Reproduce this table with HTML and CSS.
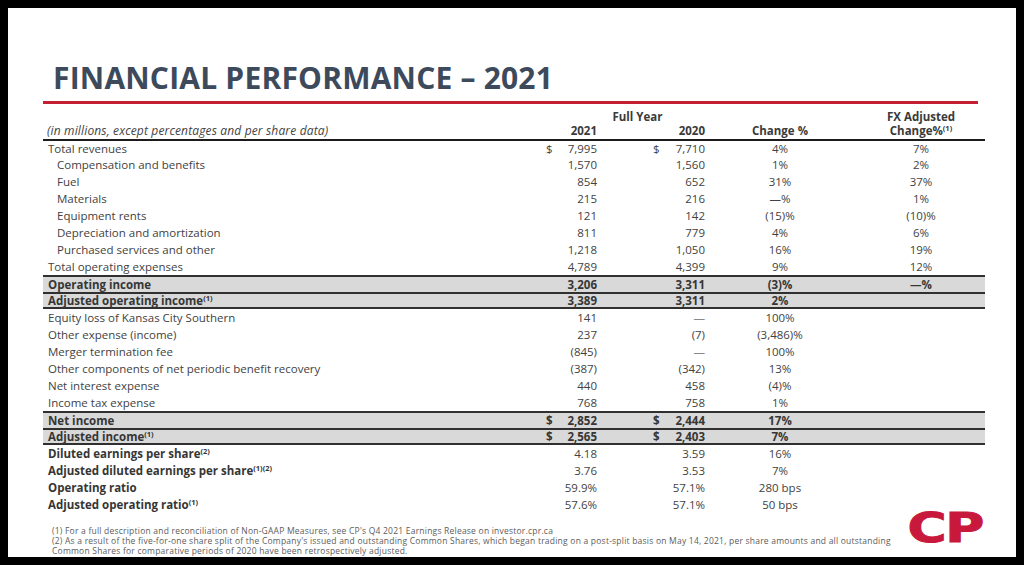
FILE: index.html
```html
<!DOCTYPE html>
<html lang="en">
<head>
<meta charset="utf-8">
<title>Financial Performance – 2021</title>
<link rel="stylesheet" href="styles.css">
</head>
<body>
<div class="slide">
  <h1 class="title">FINANCIAL PERFORMANCE – 2021</h1>
  <div class="rule"></div>
  <div class="table">
    <div class="grid thead">
      <div class="h-full">Full Year</div>
      <div class="h-fx1">FX Adjusted</div>
      <div class="caption">(in millions, except percentages and per share data)</div>
      <div class="h-2021">2021</div>
      <div class="h-2020">2020</div>
      <div class="h-chg">Change %</div>
      <div class="h-fx2">Change%<span class="sup">(1)</span></div>
    </div>

    <div class="grid row first">
      <div class="label">Total revenues</div>
      <div class="v1 money"><span>$</span><span>7,995</span></div>
      <div class="v2 money"><span>$</span><span>7,710</span></div>
      <div class="chg">4%</div>
      <div class="fx">7%</div>
    </div>
    <div class="grid row">
      <div class="label indent">Compensation and benefits</div>
      <div class="v1">1,570</div><div class="v2">1,560</div>
      <div class="chg">1%</div><div class="fx">2%</div>
    </div>
    <div class="grid row">
      <div class="label indent">Fuel</div>
      <div class="v1">854</div><div class="v2">652</div>
      <div class="chg">31%</div><div class="fx">37%</div>
    </div>
    <div class="grid row">
      <div class="label indent">Materials</div>
      <div class="v1">215</div><div class="v2">216</div>
      <div class="chg">—%</div><div class="fx">1%</div>
    </div>
    <div class="grid row">
      <div class="label indent">Equipment rents</div>
      <div class="v1">121</div><div class="v2">142</div>
      <div class="chg">(15)%</div><div class="fx">(10)%</div>
    </div>
    <div class="grid row">
      <div class="label indent">Depreciation and amortization</div>
      <div class="v1">811</div><div class="v2">779</div>
      <div class="chg">4%</div><div class="fx">6%</div>
    </div>
    <div class="grid row">
      <div class="label indent">Purchased services and other</div>
      <div class="v1">1,218</div><div class="v2">1,050</div>
      <div class="chg">16%</div><div class="fx">19%</div>
    </div>
    <div class="grid row">
      <div class="label">Total operating expenses</div>
      <div class="v1">4,789</div><div class="v2">4,399</div>
      <div class="chg">9%</div><div class="fx">12%</div>
    </div>
    <div class="grid row band">
      <div class="label">Operating income</div>
      <div class="v1">3,206</div><div class="v2">3,311</div>
      <div class="chg">(3)%</div><div class="fx">—%</div>
    </div>
    <div class="grid row band last">
      <div class="label">Adjusted operating income<span class="sup">(1)</span></div>
      <div class="v1">3,389</div><div class="v2">3,311</div>
      <div class="chg">2%</div><div class="fx"></div>
    </div>
    <div class="grid row">
      <div class="label">Equity loss of Kansas City Southern</div>
      <div class="v1">141</div><div class="v2 dash">—</div>
      <div class="chg">100%</div><div class="fx"></div>
    </div>
    <div class="grid row">
      <div class="label">Other expense (income)</div>
      <div class="v1">237</div><div class="v2">(7)</div>
      <div class="chg">(3,486)%</div><div class="fx"></div>
    </div>
    <div class="grid row">
      <div class="label">Merger termination fee</div>
      <div class="v1">(845)</div><div class="v2 dash">—</div>
      <div class="chg">100%</div><div class="fx"></div>
    </div>
    <div class="grid row">
      <div class="label">Other components of net periodic benefit recovery</div>
      <div class="v1">(387)</div><div class="v2">(342)</div>
      <div class="chg">13%</div><div class="fx"></div>
    </div>
    <div class="grid row">
      <div class="label">Net interest expense</div>
      <div class="v1">440</div><div class="v2">458</div>
      <div class="chg">(4)%</div><div class="fx"></div>
    </div>
    <div class="grid row">
      <div class="label">Income tax expense</div>
      <div class="v1">768</div><div class="v2">758</div>
      <div class="chg">1%</div><div class="fx"></div>
    </div>
    <div class="grid row band">
      <div class="label">Net income</div>
      <div class="v1 money"><span>$</span><span>2,852</span></div>
      <div class="v2 money"><span>$</span><span>2,444</span></div>
      <div class="chg">17%</div><div class="fx"></div>
    </div>
    <div class="grid row band last">
      <div class="label">Adjusted income<span class="sup">(1)</span></div>
      <div class="v1 money"><span>$</span><span>2,565</span></div>
      <div class="v2 money"><span>$</span><span>2,403</span></div>
      <div class="chg">7%</div><div class="fx"></div>
    </div>
    <div class="grid row strong">
      <div class="label">Diluted earnings per share<span class="sup">(2)</span></div>
      <div class="v1">4.18</div><div class="v2">3.59</div>
      <div class="chg">16%</div><div class="fx"></div>
    </div>
    <div class="grid row strong">
      <div class="label">Adjusted diluted earnings per share<span class="sup">(1)(2)</span></div>
      <div class="v1">3.76</div><div class="v2">3.53</div>
      <div class="chg">7%</div><div class="fx"></div>
    </div>
    <div class="grid row strong">
      <div class="label">Operating ratio</div>
      <div class="v1">59.9%</div><div class="v2">57.1%</div>
      <div class="chg">280 bps</div><div class="fx"></div>
    </div>
    <div class="grid row strong">
      <div class="label">Adjusted operating ratio<span class="sup">(1)</span></div>
      <div class="v1">57.6%</div><div class="v2">57.1%</div>
      <div class="chg">50 bps</div><div class="fx"></div>
    </div>
  </div>

  <div class="foot">
    <div class="notes">
      <div>(1) For a full description and reconciliation of Non-GAAP Measures, see CP's Q4 2021 Earnings Release on investor.cpr.ca</div>
      <div>(2) As a result of the five-for-one share split of the Company's issued and outstanding Common Shares, which began trading on a post-split basis on May 14, 2021, per share amounts and all outstanding</div>
      <div>Common Shares for comparative periods of 2020 have been retrospectively adjusted.</div>
    </div>
    <div class="logo">CP</div>
  </div>
</div>
</body>
</html>
```

FILE: styles.css
```css
* {
  box-sizing: border-box;
}

html, body {
  margin: 0;
  padding: 0;
  background: #000;
}

body {
  font-family: "Open Sans", "Noto Sans", sans-serif;
}

.slide {
  margin: 8px;
  width: 1008px;
  height: 549px;
  background: #fff;
  padding: 54px 0 0 35px;
  overflow: hidden;
}

.title {
  margin: 0;
  padding-left: 10px;
  font-size: 30px;
  line-height: 32px;
  font-weight: 700;
  color: #3d4a5b;
  letter-spacing: 0.2px;
}

.rule {
  margin-top: 7px;
  width: 935px;
  height: 3px;
  background: #c42033;
}

.table {
  margin-top: 6px;
  width: 942px;
  font-size: 11.5px;
  color: #424242;
}

.grid {
  display: grid;
  grid-template-columns: 497px 61px 108px 142px 134px;
}

.thead {
  grid-template-rows: 14px 15px;
  border-bottom: 2px solid #1c1c1c;
  font-weight: 700;
  line-height: 14px;
  color: #3a3a3a;
}

.h-full {
  grid-column: 2 / 4;
  grid-row: 1;
  text-align: center;
  padding-left: 26px;
}

.h-fx1 {
  grid-column: 5;
  grid-row: 1;
  text-align: center;
  padding-left: 6px;
}

.caption {
  grid-column: 1;
  grid-row: 2;
  font-style: italic;
  font-weight: 400;
  font-size: 12px;
  letter-spacing: 0.15px;
  padding-left: 4px;
  color: #444;
  white-space: nowrap;
}

.h-2021 {
  grid-column: 2;
  grid-row: 2;
  text-align: right;
  padding-right: 4px;
}

.h-2020 {
  grid-column: 3;
  grid-row: 2;
  text-align: right;
  padding-right: 4px;
}

.h-chg {
  grid-column: 4;
  grid-row: 2;
  text-align: center;
}

.h-fx2 {
  grid-column: 5;
  grid-row: 2;
  text-align: center;
  padding-left: 6px;
}

.row {
  height: 17px;
  align-items: center;
  line-height: 13px;
}

.row.first {
  height: 15px;
}

.label {
  padding-left: 5px;
  white-space: nowrap;
}

.label.indent {
  padding-left: 14px;
}

.v1, .v2 {
  text-align: right;
  padding-right: 4px;
}

.money {
  display: flex;
  justify-content: space-between;
}

.v1.money {
  padding-left: 6px;
}

.v2.money {
  padding-left: 52px;
}

.dash {
  color: #8a8a8a;
}

.chg {
  text-align: center;
}

.fx {
  text-align: center;
  padding-left: 6px;
}

.band {
  background: #d9d9d9;
  border-top: 2px solid #303030;
  font-weight: 700;
  color: #363636;
}

.band.last {
  border-bottom: 2px solid #303030;
}

.strong .label {
  font-weight: 700;
  color: #363636;
}

.sup {
  font-size: 7.5px;
  line-height: 0;
  vertical-align: 4px;
}

.foot {
  display: flex;
  justify-content: space-between;
  align-items: flex-start;
  width: 942px;
}

.notes {
  padding: 13px 0 0 9px;
  font-size: 8.5px;
  line-height: 10px;
  color: #5c5c5c;
  letter-spacing: 0.22px;
  white-space: nowrap;
}

.logo {
  margin-right: 2px;
  font-family: "DejaVu Sans", sans-serif;
  font-weight: 700;
  font-size: 41px;
  line-height: 30px;
  color: #c8183c;
  -webkit-text-stroke: 1px #c8183c;
  transform: scaleX(1.3);
  transform-origin: right center;
  letter-spacing: -1px;
}
```
